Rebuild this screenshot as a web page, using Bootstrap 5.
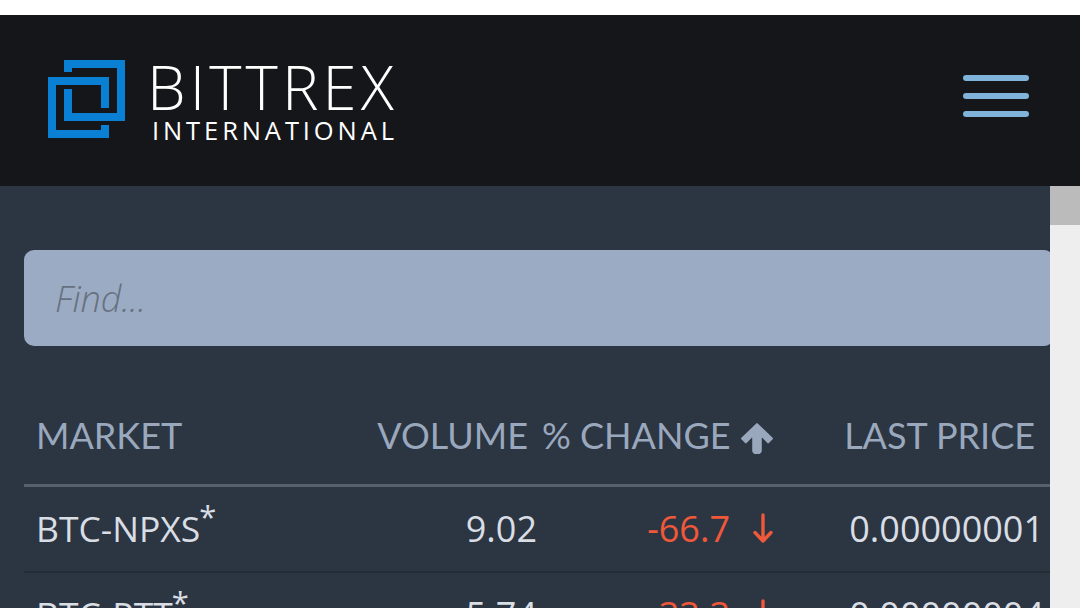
<!DOCTYPE html>
<html lang="en">
<head>
<meta charset="utf-8">
<title>Bittrex International</title>
<link href="https://cdn.jsdelivr.net/npm/bootstrap@5.3.0/dist/css/bootstrap.min.css" rel="stylesheet">
<script src="https://cdn.jsdelivr.net/npm/bootstrap@5.3.0/dist/js/bootstrap.bundle.min.js"></script>
<style>
html, body { height: 608px; overflow: hidden; background: #fff; }
body { font-family: "Open Sans", sans-serif; padding-top: 15px; }
.site-head { height: 171px; background: #141619; padding: 0 51px 0 48px; }
.logo-mark { width: 77px; height: 78px; margin-bottom: 3px; }
.brand-box { margin-left: 28px; color: #fff; line-height: 1; margin-bottom: 1px; }
.brand-top { font-weight: 300; font-size: 61.5px; letter-spacing: 4.1px; height: 61px; line-height: 58px; margin-left: -6px; }
.brand-sub { font-size: 25.5px; letter-spacing: 3.9px; line-height: 25px; margin-left: -1px; }
.burger { width: 66px; gap: 12px; margin-bottom: 10px; }
.burger span { height: 6px; border-radius: 3px; background: #7fb3d9; }
.shell { height: 422px; }
.main-pane { background: #2c3542; padding: 64px 0 0 24px; overflow: hidden; min-width: 0; }
.scroll-rail { width: 30px; background: #eeeeee; }
.scroll-thumb { height: 39px; background: #bbbbbb; }
.find-input.form-control { width: 1030px; max-width: none; height: 96px; background: #9cabc4; border: 0; border-radius: 10px; padding: 0 31px; font-family: "Open Sans", sans-serif; font-size: 36px; font-weight: 300; box-shadow: none; }
.find-input::placeholder { color: #66717f; font-style: italic; opacity: 1; }
.market-table.table { --bs-table-bg: transparent; --bs-table-color: #d9dde4; width: 1026px; margin: 66px 0 0; table-layout: fixed; }
.market-table th { font-family: Lato, sans-serif; font-weight: 400; font-size: 36px; color: #9aa8bd; white-space: nowrap; border-bottom: 3px solid #56606d; padding: 0 0 26px; line-height: 46px; background: transparent; }
.market-table td { font-size: 36px; font-weight: 400; line-height: 45px; padding: 19px 0 20px; border-bottom: 2px solid #232b36; white-space: nowrap; background: transparent; color: #d9dde4; }
.market-table th:first-child { padding-left: 12px; }
.market-table td.name-cell { padding-left: 12px; font-size: 35.5px; }
.market-table td.vol-cell { padding-right: 5px; text-align: right; }
.market-table th.vol-head { padding-right: 14px; text-align: right; }
.market-table td.chg-cell { color: #f0583a; text-align: right; padding-right: 12px; }
.market-table th.price-head { text-align: right; padding-right: 15px; }
.market-table td.price-cell { text-align: right; padding-right: 6px; }
.star-mark { font-size: 31px; line-height: 0; position: relative; top: -14px; margin-left: -1px; }
.up-icon { width: 34px; height: 32px; vertical-align: -5px; margin-left: 9px; }
.down-icon { width: 22px; height: 32px; vertical-align: -2px; margin-left: 22px; }
</style>
</head>
<body>
<header class="site-head d-flex align-items-center justify-content-between">
  <div class="d-flex align-items-center">
    <svg class="logo-mark" viewBox="0 0 77 78" aria-label="Bittrex logo">
      <path fill="#0a80d4" d="M16 0H77V61H16V29H24V53H69V8H24V12H16Z"/>
      <path fill="#0a80d4" d="M0 17H61V48H53V25H8V70H53V65H61V78H0Z"/>
    </svg>
    <div class="brand-box">
      <div class="brand-top">BITTREX</div>
      <div class="brand-sub">INTERNATIONAL</div>
    </div>
  </div>
  <div class="burger d-flex flex-column">
    <span></span><span></span><span></span>
  </div>
</header>
<div class="shell d-flex">
  <main class="main-pane flex-grow-1">
    <input class="find-input form-control" type="text" placeholder="Find...">
    <table class="market-table table">
      <colgroup>
        <col style="width:340px"><col style="width:178px"><col style="width:244px"><col style="width:264px">
      </colgroup>
      <thead>
        <tr>
          <th>MARKET</th>
          <th class="vol-head">VOLUME</th>
          <th>% CHANGE<svg class="up-icon" viewBox="0 0 32 30"><path fill="#9aa8bd" stroke="#9aa8bd" stroke-width="2" stroke-linejoin="round" d="M16 2 30 15.500 26.500 19 19.500 12V27a3.500 2.500 0 0 1-7 0V12L5.500 19 2 15.500Z"/></svg></th>
          <th class="price-head">LAST PRICE</th>
        </tr>
      </thead>
      <tbody>
        <tr>
          <td class="name-cell">BTC-NPXS<span class="star-mark">*</span></td>
          <td class="vol-cell">9.02</td>
          <td class="chg-cell">-66.7<svg class="down-icon" viewBox="0 0 22 32"><path fill="none" stroke="#f0583a" stroke-width="3.400" stroke-linecap="round" stroke-linejoin="round" d="M11 3V29M3 20.500 11 29 19 20.500"/></svg></td>
          <td class="price-cell">0.00000001</td>
        </tr>
        <tr>
          <td class="name-cell">BTC-PTT<span class="star-mark">*</span></td>
          <td class="vol-cell">5.74</td>
          <td class="chg-cell">-33.3<svg class="down-icon" viewBox="0 0 22 32"><path fill="none" stroke="#f0583a" stroke-width="3.400" stroke-linecap="round" stroke-linejoin="round" d="M11 3V29M3 20.500 11 29 19 20.500"/></svg></td>
          <td class="price-cell">0.00000004</td>
        </tr>
      </tbody>
    </table>
  </main>
  <div class="scroll-rail flex-shrink-0"><div class="scroll-thumb"></div></div>
</div>
</body>
</html>
